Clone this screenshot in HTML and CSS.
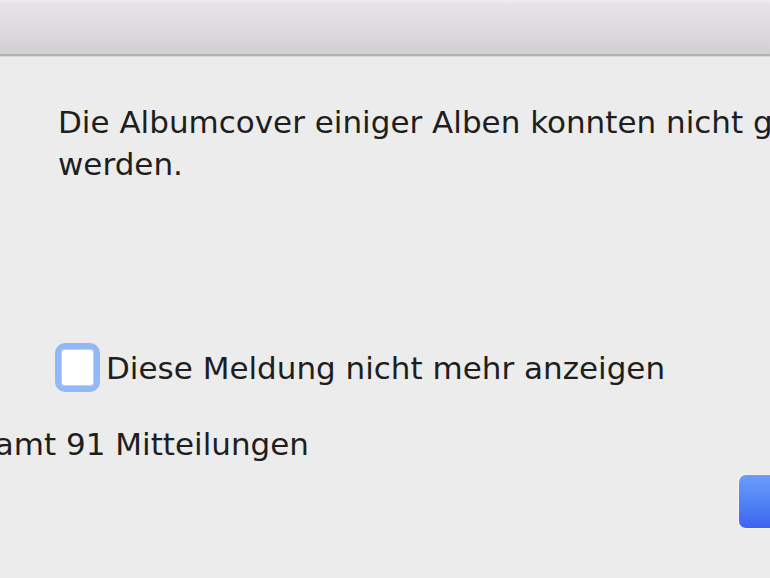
FILE: index.html
```html
<!DOCTYPE html>
<html lang="de">
<head>
    <meta charset="UTF-8" />
    <title>Albumcover</title>
    <link rel="stylesheet" href="styles.css">
</head>
<body>
<div class="dialog">
    <div class="titlebar"></div>
    <div class="content">
        <p class="message">Die Albumcover einiger Alben konnten nicht geladen werden.</p>
        <label class="check">
            <span class="box"></span>
            <span class="check-label">Diese Meldung nicht mehr anzeigen</span>
        </label>
    </div>
    <div class="footer">
        <div class="count">Insgesamt 91 Mitteilungen</div>
    </div>
    <div class="actions">
        <button class="btn" type="button">OK</button>
    </div>
</div>
</body>
</html>
```

FILE: styles.css
```css
* {
    box-sizing: border-box;
}

html,
body {
    margin: 0;
    height: 100%;
    overflow: hidden;
}

body {
    background: #ececec;
    font-family: 'DejaVu Sans', 'Liberation Sans', sans-serif;
    font-size: 31px;
    color: #1e1e1e;
}

.dialog {
    width: 770px;
}

.titlebar {
    height: 56px;
    background: linear-gradient(180deg, #efedef 0, #e6e4e6 4px, #d4d2d4 48px, #d2d0d2 52px);
    border-bottom: 2px solid #b3b1b3;
    box-shadow: 0 1px 0 #d8d6d8;
}

.content {
    padding: 45px 0 0 58px;
}

.message {
    margin: 0;
    width: 880px;
    line-height: 42px;
}

.check {
    display: flex;
    align-items: center;
    margin: 158px 0 0 -3px;
    gap: 6px;
}

.box {
    width: 45px;
    height: 49px;
    border-radius: 10px;
    background: #fff;
    border: 6px solid #92b8f7;
    box-shadow: inset 0 0 0 1px #c3d0e6;
    flex-shrink: 0;
}

.check-label {
    white-space: nowrap;
}

.footer {
    display: flex;
    justify-content: flex-end;
    width: 309px;
    margin-top: 34px;
}

.count {
    white-space: nowrap;
}

.actions {
    display: flex;
    margin-top: 13px;
}

.btn {
    margin-left: 739px;
    width: 240px;
    height: 53px;
    flex-shrink: 0;
    border: none;
    border-radius: 7px;
    background: linear-gradient(180deg, #6c9df9 0%, #4d7ef6 60%, #3d62f0 100%);
    box-shadow: 0 0 0 1px #f6f3ee;
    color: #fff;
    font-size: 31px;
    font-family: inherit;
}
```
